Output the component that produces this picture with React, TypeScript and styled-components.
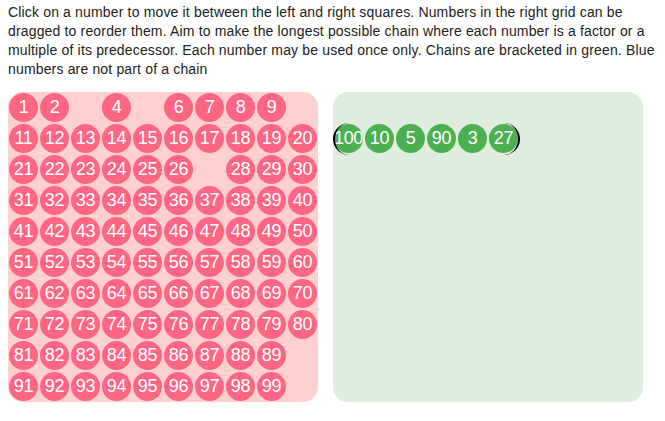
import React from "react";
import styled, { createGlobalStyle, css } from "styled-components";

const Global = createGlobalStyle`
  html, body { margin: 0; padding: 0; background: #fff; }
  body { font-family: "Liberation Sans", Arial, Helvetica, sans-serif; }
`;

const Page = styled.div`
  padding: 3px 8px 0 8px;
`;

const Intro = styled.p`
  margin: 0;
  font-size: 14px;
  line-height: 19px;
  letter-spacing: 0.16px;
  color: #222;
`;

const Boards = styled.div`
  display: flex;
  gap: 15px;
  margin-top: 13px;
`;

const Board = styled.div<{ $tone: "pool" | "chain" }>`
  width: 310px;
  height: 310px;
  box-sizing: border-box;
  border-radius: 15px;
  background: ${(p) => (p.$tone === "pool" ? "#ffd0d0" : "#dfeddf")};
  padding-top: ${(p) => (p.$tone === "chain" ? "31px" : "0")};
`;

const Grid = styled.div`
  display: grid;
  grid-template-columns: repeat(10, 31px);
  grid-auto-rows: 31px;
`;

const Slot = styled.div`
  display: flex;
  align-items: flex-start;
  justify-content: flex-start;
`;

const Ball = styled.div<{ $tone: "pool" | "chain"; $bracket?: "left" | "right" }>`
  position: relative;
  width: 29px;
  height: 29px;
  margin: 1px 0 0 1px;
  border-radius: 50%;
  background: ${(p) => (p.$tone === "pool" ? "#ff6683" : "#4cb050")};
  color: #fff;
  font-size: 18px;
  line-height: 29px;
  display: flex;
  align-items: center;
  justify-content: center;
  white-space: nowrap;
  letter-spacing: -0.3px;
  ${(p) =>
    p.$bracket &&
    css`
      &::before {
        content: "";
        position: absolute;
        left: -1.5px;
        top: -1.5px;
        right: -1.5px;
        bottom: -1.5px;
        border-radius: 50%;
        border: 0 solid #000;
        ${p.$bracket === "left" ? "border-left-width: 2px;" : "border-right-width: 2px;"}
      }
    `}
`;

const used = new Set([3, 5, 10, 27, 90, 100]);
const chain = [100, 10, 5, 90, 3, 27];

export default function App() {
  const pool = Array.from({ length: 100 }, (_, i) => i + 1);
  return (
    <Page>
      <Global />
      <Intro>
        Click on a number to move it between the left and right squares. Numbers in the right grid can be
        dragged to reorder them. Aim to make the longest possible chain where each number is a factor or a
        multiple of its predecessor. Each number may be used once only. Chains are bracketed in green. Blue
        numbers are not part of a chain
      </Intro>
      <Boards>
        <Board $tone="pool">
          <Grid>
            {pool.map((n) => (
              <Slot key={n}>{!used.has(n) && <Ball $tone="pool">{n}</Ball>}</Slot>
            ))}
          </Grid>
        </Board>
        <Board $tone="chain">
          <Grid>
            {chain.map((n, i) => (
              <Slot key={n}>
                <Ball
                  $tone="chain"
                  $bracket={i === 0 ? "left" : i === chain.length - 1 ? "right" : undefined}
                >
                  {n}
                </Ball>
              </Slot>
            ))}
          </Grid>
        </Board>
      </Boards>
    </Page>
  );
}
